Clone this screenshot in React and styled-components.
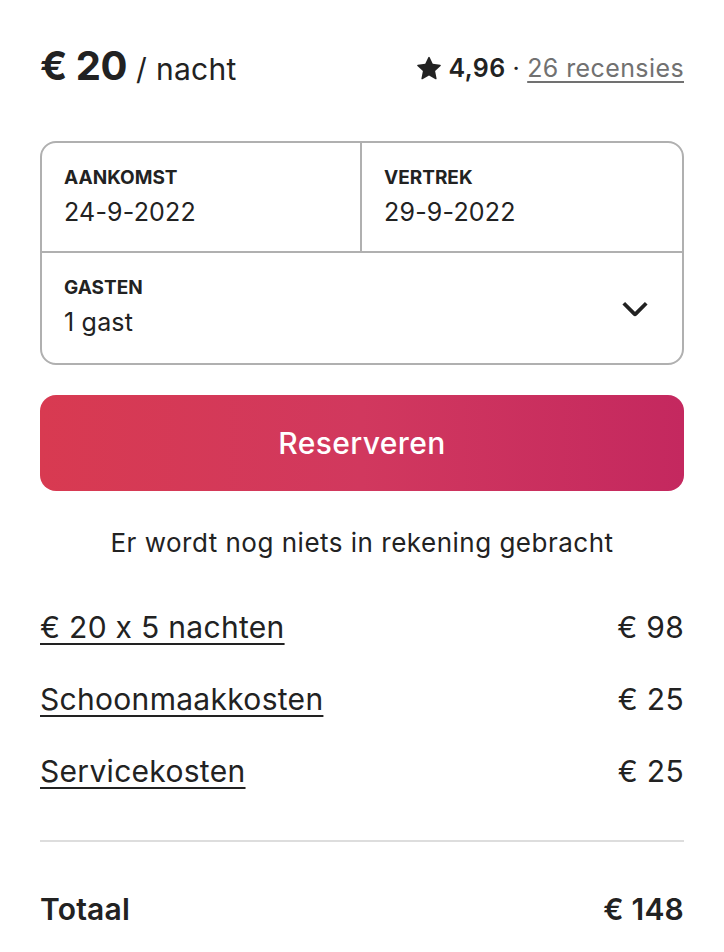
import React from 'react'
import styled, { createGlobalStyle } from 'styled-components'

const GlobalStyle = createGlobalStyle`
  body {
    margin: 0;
    background: #fff;
    font-family: Inter, Roboto, "Liberation Sans", sans-serif;
    font-feature-settings: "calt" 0;
    color: #222;
  }
`

const Page = styled.div`
  padding: 41px 40px 0;
  display: flex;
  flex-direction: column;
`

const Header = styled.div`
  display: flex;
  justify-content: space-between;
  align-items: baseline;
  height: 52px;
`

const Price = styled.div`
  font-size: 40px;
  font-weight: 700;
  letter-spacing: -0.5px;

  span {
    font-size: 30px;
    font-weight: 400;
    letter-spacing: 0.3px;
    margin-left: 9px;
  }
`

const Rating = styled.div`
  display: flex;
  align-items: center;
  font-size: 25px;
  letter-spacing: 0.4px;
  gap: 7px;

  b {
    font-weight: 600;
  }

  a {
    color: #717171;
    text-decoration: underline;
    text-decoration-thickness: 1.5px;
    text-underline-offset: 4px;
  }
`

const Picker = styled.div`
  margin-top: 48px;
  border: 2px solid #b0b0b0;
  border-radius: 16px;
  display: grid;
  grid-template-columns: 1fr 1fr;
  grid-template-rows: 110px 110px;
  overflow: hidden;
`

const Cell = styled.div`
  padding: 23px 22px 0;
  border-right: ${p => (p.$divider ? '2px solid #b0b0b0' : 'none')};
  border-bottom: ${p => (p.$bottom ? '2px solid #b0b0b0' : 'none')};
  grid-column: ${p => (p.$wide ? '1 / span 2' : 'auto')};
  display: flex;
  justify-content: space-between;
  align-items: center;
`

const Label = styled.div`
  font-size: 19px;
  font-weight: 700;
  margin-bottom: 8px;
`

const Value = styled.div`
  font-size: 25px;
  letter-spacing: 0.2px;
`

const Field = styled.div`
  align-self: flex-start;
`

const Chevron = styled.svg`
  width: 30px;
  height: 30px;
  margin-right: 10px;
  margin-top: -26px;
`

const ReserveButton = styled.button`
  margin-top: 30px;
  height: 96px;
  border: none;
  border-radius: 16px;
  background: linear-gradient(to right, #d83a51 0%, #d1385e 50%, #c4285f 100%);
  color: #fff;
  font-family: inherit;
  font-size: 30px;
  font-weight: 500;
  letter-spacing: 0.4px;
`

const Note = styled.p`
  margin: 36px 0 33px;
  text-align: center;
  font-size: 26px;
  letter-spacing: 0.5px;
`

const Line = styled.div`
  display: flex;
  justify-content: space-between;
  align-items: center;
  height: 72px;
  font-size: 30px;
  letter-spacing: 0.3px;

  a {
    color: #222;
    text-decoration: underline;
    text-decoration-thickness: 1.5px;
    text-underline-offset: 5px;
  }
`

const Rule = styled.hr`
  margin: 33px 0 0;
  border: none;
  border-top: 2px solid #dddddd;
`

const Total = styled.div`
  display: flex;
  justify-content: space-between;
  align-items: center;
  height: 72px;
  margin-top: 31px;
  font-size: 30px;
  font-weight: 600;
  letter-spacing: 0.2px;
`

const fees = [
  ['€ 20 x 5 nachten', '€ 98'],
  ['Schoonmaakkosten', '€ 25'],
  ['Servicekosten', '€ 25'],
]

export default function App() {
  return (
    <>
      <GlobalStyle />
      <Page>
        <Header>
          <Price>
            € 20<span>/ nacht</span>
          </Price>
          <Rating>
            <svg width="24" height="24" viewBox="0 0 32 32" fill="#222">
              <path d="M15.1 1.58l-4.13 8.88-9.86 1.27a1 1 0 0 0-.54 1.74l7.3 6.57-1.97 9.85a1 1 0 0 0 1.48 1.06l8.62-5 8.63 5a1 1 0 0 0 1.48-1.06l-1.97-9.85 7.3-6.57a1 1 0 0 0-.55-1.73l-9.86-1.28-4.12-8.88a1 1 0 0 0-1.82 0z" />
            </svg>
            <b>4,96</b>
            <span>·</span>
            <a>26 recensies</a>
          </Rating>
        </Header>

        <Picker>
          <Cell $divider $bottom>
            <Field>
              <Label>AANKOMST</Label>
              <Value>24-9-2022</Value>
            </Field>
          </Cell>
          <Cell $bottom>
            <Field>
              <Label>VERTREK</Label>
              <Value>29-9-2022</Value>
            </Field>
          </Cell>
          <Cell $wide>
            <Field>
              <Label>GASTEN</Label>
              <Value>1 gast</Value>
            </Field>
            <Chevron viewBox="0 0 32 32" fill="none" stroke="#222" strokeWidth="4">
              <path d="M28 12L16.7 23.3a1 1 0 0 1-1.4 0L4 12" />
            </Chevron>
          </Cell>
        </Picker>

        <ReserveButton>Reserveren</ReserveButton>

        <Note>Er wordt nog niets in rekening gebracht</Note>

        {fees.map(([name, amount]) => (
          <Line key={name}>
            <a>{name}</a>
            <span>{amount}</span>
          </Line>
        ))}

        <Rule />

        <Total>
          <span>Totaal</span>
          <span>€ 148</span>
        </Total>
      </Page>
    </>
  )
}
